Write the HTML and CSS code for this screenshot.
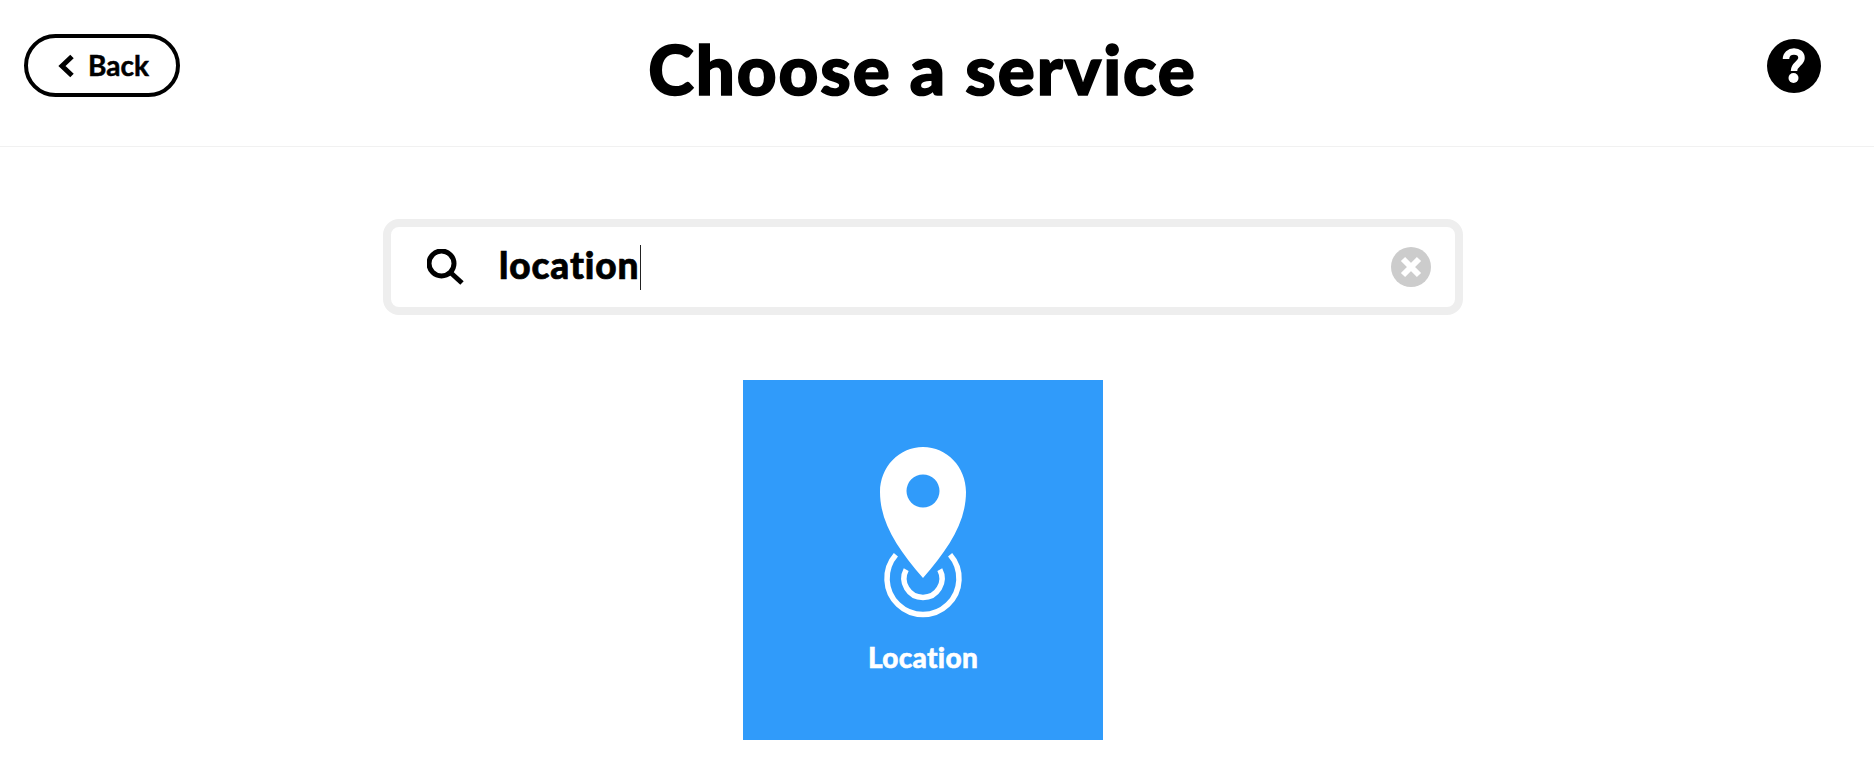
FILE: index.html
```html
<!DOCTYPE html>
<html lang="en">
<head>
<meta charset="utf-8">
<title>Choose a service</title>
<link rel="stylesheet" href="styles.css">
</head>
<body>
<header class="topbar">
  <div class="topbar-left">
    <a class="back" href="#">
      <svg class="back-icon" viewBox="0 0 16 24" width="16" height="24"><path d="M14 2.500 L4 12 L14 21.500" fill="none" stroke="#000" stroke-width="5"/></svg>
      <span>Back</span>
    </a>
  </div>
  <h1 class="title">Choose a service</h1>
  <div class="topbar-right">
    <svg class="help" viewBox="0 0 54 54" width="54" height="54"><circle cx="27" cy="27" r="27" fill="#000"/><path d="M19 20 C19 15.500 22.500 12.500 27 12.500 C31.500 12.500 34.500 15 34.500 19 C34.500 24.500 27 25 27 32" fill="none" stroke="#fff" stroke-width="6.500"/><circle cx="26.500" cy="39" r="5" fill="#fff"/></svg>
  </div>
</header>
<main class="content">
  <div class="search">
    <svg class="search-icon" viewBox="0 0 38 36" width="38" height="36"><circle cx="14.500" cy="14.500" r="12.500" fill="none" stroke="#000" stroke-width="5"/><path d="M24 24 L35 34" fill="none" stroke="#000" stroke-width="5"/></svg>
    <div class="query"><span class="query-text">location</span><i class="caret"></i></div>
    <svg class="clear" viewBox="0 0 40 40" width="40" height="40"><circle cx="20" cy="20" r="20" fill="#ccc"/><path d="M12 12 L28 28 M28 12 L12 28" stroke="#fff" stroke-width="6"/></svg>
  </div>
  <a class="card" href="#">
    <svg class="pin" viewBox="0 0 90 175" width="90" height="175">
      <path fill="#fff" fill-rule="evenodd" d="M45 2 C21 2 2 22 2 47 C2 78 20 104 45 133 C70 104 88 78 88 47 C88 22 69 2 45 2 Z M45 29.500 A16.500 16.500 0 1 1 45 62.500 A16.500 16.500 0 1 1 45 29.500 Z"/>
      <path fill="none" stroke="#fff" stroke-width="5.500" d="M17.900 109.800 A36 36 0 1 0 72.100 109.800"/>
      <path fill="none" stroke="#fff" stroke-width="5.500" d="M28.200 124.600 A19 19 0 1 0 61.800 124.600"/>
    </svg>
    <span class="card-label">Location</span>
  </a>
</main>
</body>
</html>
```

FILE: styles.css
```css
* { box-sizing: border-box; }
html, body { margin: 0; padding: 0; background: #fff; }
body {
  font-family: "Lato", "Liberation Sans", sans-serif;
  color: #000;
  font-variant-ligatures: none;
}

.topbar {
  display: grid;
  grid-template-columns: 1fr auto 1fr;
  align-items: center;
  height: 147px;
  padding: 0 53px 15px 24px;
  border-bottom: 1px solid #f1f1f1;
}
.topbar-right { display: flex; justify-content: flex-end; }

.back {
  display: inline-flex;
  align-items: center;
  gap: 14px;
  width: 156px;
  height: 63px;
  padding-left: 30px;
  border: 4px solid #000;
  border-radius: 32px;
  color: #000;
  font-size: 28px;
  line-height: 34px;
  font-weight: 700;
  text-decoration: none;
  -webkit-text-stroke: 0.5px #000;
}
.back span { margin-bottom: 2px; }
.back-icon { display: block; }

.title {
  margin: 6px 0 0;
  font-size: 69px;
  line-height: 84px;
  font-weight: 900;
  letter-spacing: 1.9px;
  white-space: nowrap;
  -webkit-text-stroke: 1.6px #000;
}
.help { display: block; }

.content {
  display: flex;
  flex-direction: column;
  align-items: center;
  margin-right: 28px;
  padding-top: 72px;
}

.search {
  display: flex;
  align-items: center;
  width: 1080px;
  height: 96px;
  padding: 0 24px 0 36px;
  border: 8px solid #eee;
  border-radius: 16px;
}
.search-icon { display: block; flex: none; }
.query {
  display: flex;
  align-items: center;
  flex: 1;
  margin-left: 34px;
  font-size: 37px;
  font-weight: 900;
}
.query-text {
  margin-bottom: 5px;
  letter-spacing: 0.9px;
  -webkit-text-stroke: 0.7px #000;
}
.caret {
  display: block;
  width: 1px;
  height: 45px;
  margin-left: 1px;
  background: #222;
}
.clear { display: block; flex: none; }

.card {
  display: flex;
  flex-direction: column;
  align-items: center;
  width: 360px;
  height: 360px;
  margin-top: 65px;
  padding-top: 65px;
  background: #309bfa;
  color: #fff;
  text-decoration: none;
}
.pin { display: block; }
.card-label {
  margin-top: 20px;
  font-size: 28px;
  line-height: 34px;
  font-weight: 900;
  letter-spacing: 0.3px;
  -webkit-text-stroke: 0.5px #fff;
}
```
